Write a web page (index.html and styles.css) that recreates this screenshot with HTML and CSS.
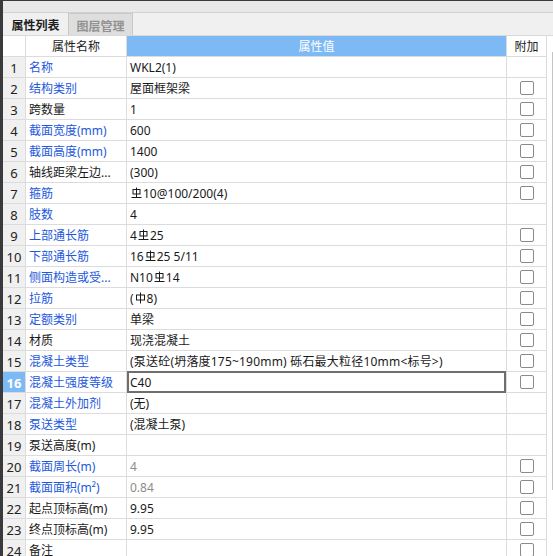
FILE: index.html
```html
<!DOCTYPE html>
<html lang="zh-CN">
<head>
<meta charset="utf-8">
<link rel="stylesheet" href="styles.css">
</head>
<body>
<div class="window">
  <div class="panel">
    <div class="topbar"></div>
    <div class="tabs">
      <div class="tab active">属性列表</div>
      <div class="tab">图层管理</div>
    </div>
    <div class="grid">
      <div class="row head">
        <div class="c num"></div>
        <div class="c name center">属性名称</div>
        <div class="c val center hv">属性值</div>
        <div class="c add center">附加</div>
      </div>
      <div class="row"><div class="c num">1</div><div class="c name blue">名称</div><div class="c val">WKL2(1)</div><div class="c add"></div></div>
      <div class="row"><div class="c num">2</div><div class="c name blue">结构类别</div><div class="c val">屋面框架梁</div><div class="c add"><span class="cb"></span></div></div>
      <div class="row"><div class="c num">3</div><div class="c name">跨数量</div><div class="c val">1</div><div class="c add"><span class="cb"></span></div></div>
      <div class="row"><div class="c num">4</div><div class="c name blue">截面宽度(mm)</div><div class="c val">600</div><div class="c add"><span class="cb"></span></div></div>
      <div class="row"><div class="c num">5</div><div class="c name blue">截面高度(mm)</div><div class="c val">1400</div><div class="c add"><span class="cb"></span></div></div>
      <div class="row"><div class="c num">6</div><div class="c name">轴线距梁左边...</div><div class="c val">(300)</div><div class="c add"><span class="cb"></span></div></div>
      <div class="row"><div class="c num">7</div><div class="c name blue">箍筋</div><div class="c val"><svg class="rb3" viewBox="0 0 11 12"><rect x="2" y="2.5" width="7" height="4.5"/><path d="M5.5 0.5V10M0.5 10.5H10.5"/></svg>10@100/200(4)</div><div class="c add"><span class="cb"></span></div></div>
      <div class="row"><div class="c num">8</div><div class="c name blue">肢数</div><div class="c val">4</div><div class="c add"></div></div>
      <div class="row"><div class="c num">9</div><div class="c name blue">上部通长筋</div><div class="c val">4<svg class="rb3" viewBox="0 0 11 12"><rect x="2" y="2.5" width="7" height="4.5"/><path d="M5.5 0.5V10M0.5 10.5H10.5"/></svg>25</div><div class="c add"><span class="cb"></span></div></div>
      <div class="row"><div class="c num">10</div><div class="c name blue">下部通长筋</div><div class="c val">16<svg class="rb3" viewBox="0 0 11 12"><rect x="2" y="2.5" width="7" height="4.5"/><path d="M5.5 0.5V10M0.5 10.5H10.5"/></svg>25 5/11</div><div class="c add"><span class="cb"></span></div></div>
      <div class="row"><div class="c num">11</div><div class="c name blue">侧面构造或受...</div><div class="c val">N10<svg class="rb3" viewBox="0 0 11 12"><rect x="2" y="2.5" width="7" height="4.5"/><path d="M5.5 0.5V10M0.5 10.5H10.5"/></svg>14</div><div class="c add"><span class="cb"></span></div></div>
      <div class="row"><div class="c num">12</div><div class="c name blue">拉筋</div><div class="c val">(<svg class="rb1" viewBox="0 0 11 12"><rect x="1.5" y="3" width="8" height="5"/><path d="M5.5 0.5V11.5"/></svg>8)</div><div class="c add"><span class="cb"></span></div></div>
      <div class="row"><div class="c num">13</div><div class="c name blue">定额类别</div><div class="c val">单梁</div><div class="c add"><span class="cb"></span></div></div>
      <div class="row"><div class="c num">14</div><div class="c name">材质</div><div class="c val">现浇混凝土</div><div class="c add"><span class="cb"></span></div></div>
      <div class="row"><div class="c num">15</div><div class="c name blue">混凝土类型</div><div class="c val wide">(泵送砼(坍落度175~190mm) 砾石最大粒径10mm&lt;标号&gt;)</div><div class="c add"><span class="cb"></span></div></div>
      <div class="row sel"><div class="c num">16</div><div class="c name blue">混凝土强度等级</div><div class="c val">C40</div><div class="c add"><span class="cb"></span></div></div>
      <div class="row"><div class="c num">17</div><div class="c name blue">混凝土外加剂</div><div class="c val">(无)</div><div class="c add"></div></div>
      <div class="row"><div class="c num">18</div><div class="c name blue">泵送类型</div><div class="c val">(混凝土泵)</div><div class="c add"></div></div>
      <div class="row"><div class="c num">19</div><div class="c name">泵送高度(m)</div><div class="c val"></div><div class="c add"></div></div>
      <div class="row"><div class="c num">20</div><div class="c name blue">截面周长(m)</div><div class="c val grey">4</div><div class="c add"><span class="cb"></span></div></div>
      <div class="row"><div class="c num">21</div><div class="c name blue">截面面积(m²)</div><div class="c val grey">0.84</div><div class="c add"><span class="cb"></span></div></div>
      <div class="row"><div class="c num">22</div><div class="c name">起点顶标高(m)</div><div class="c val">9.95</div><div class="c add"><span class="cb"></span></div></div>
      <div class="row"><div class="c num">23</div><div class="c name">终点顶标高(m)</div><div class="c val">9.95</div><div class="c add"><span class="cb"></span></div></div>
      <div class="row"><div class="c num">24</div><div class="c name">备注</div><div class="c val"></div><div class="c add"><span class="cb"></span></div></div>
    </div>
    <div class="scroll"></div>
  </div>
</div>
</body>
</html>
```
FILE: styles.css
```css
html, body {
  margin: 0;
  padding: 0;
}
body {
  width: 553px;
  height: 556px;
  overflow: hidden;
  font-family: "Noto Sans", "Noto Sans CJK SC", sans-serif;
  font-size: 12px;
  color: #1a1a1a;
}
.window {
  background: #3a3a3c;
  padding: 1px 0 0 3px;
  height: 556px;
  box-sizing: border-box;
}
.panel {
  position: relative;
  background: #ffffff;
  height: 100%;
  overflow: hidden;
}
.topbar {
  height: 11px;
  background: #e8e8e8;
  border-bottom: 1px solid #d2d2d2;
}
.tabs {
  height: 22px;
  background: #f0f0f0;
  border-bottom: 1px solid #dadada;
  display: flex;
}
.tab {
  width: 65px;
  height: 22px;
  box-sizing: border-box;
  display: flex;
  align-items: center;
  justify-content: center;
  font-family: "Noto Sans CJK SC", sans-serif;
  font-weight: bold;
  font-size: 12px;
  color: #929292;
  background: #dedede;
  border: 1px solid #c9c9c9;
  border-bottom: none;
  padding-top: 1px;
}
.tab.active {
  color: #1e1e1e;
  background: #f0f0f0;
  border: none;
}
.grid {
  width: 544px;
}
.row {
  display: grid;
  grid-template-columns: 23px 101px 380px 40px;
  height: 21px;
}
.c {
  box-sizing: border-box;
  height: 21px;
  border-right: 1px solid #dcdcdc;
  border-bottom: 1px solid #dcdcdc;
  line-height: 22px;
  white-space: nowrap;
  overflow: hidden;
}
.num {
  background: #f0f0f0;
  text-align: center;
  font-size: 13px;
  color: #222;
}
.head .num {
  background: #ffffff;
}
.name {
  padding-left: 3px;
  color: #1a1a1a;
}
.name.blue {
  color: #2358dc;
}
.val {
  padding-left: 3px;
}
.val.wide {
  letter-spacing: 0.2px;
}
.val.grey {
  color: #8c8c8c;
}
.center {
  text-align: center;
  padding-left: 0;
}
.hv {
  background: #7cb9f5;
  color: #ffffff;
}
.add {
  display: flex;
  align-items: center;
  justify-content: center;
}
.head .add {
  display: block;
}
.cb {
  width: 12px;
  height: 12px;
  border: 1px solid #8a8a8a;
  border-radius: 2px;
  background: #fff;
}
.rb3, .rb1 {
  width: 11px;
  height: 12px;
  vertical-align: -1px;
  fill: none;
  stroke: #1a1a1a;
  stroke-width: 1;
  margin: 0 1px;
}
.sel .num {
  background: #7cb9f5;
  color: #ffffff;
  font-weight: bold;
}
.sel .val {
  box-shadow: inset 0 0 0 2px #6e6e6e;
  margin-top: -1px;
  height: 22px;
  line-height: 24px;
  border-bottom: none;
  position: relative;
}
.scroll {
  position: absolute;
  left: 549px;
  top: 51px;
  width: 1px;
  height: 438px;
  background: #c4c4c4;
}
```
